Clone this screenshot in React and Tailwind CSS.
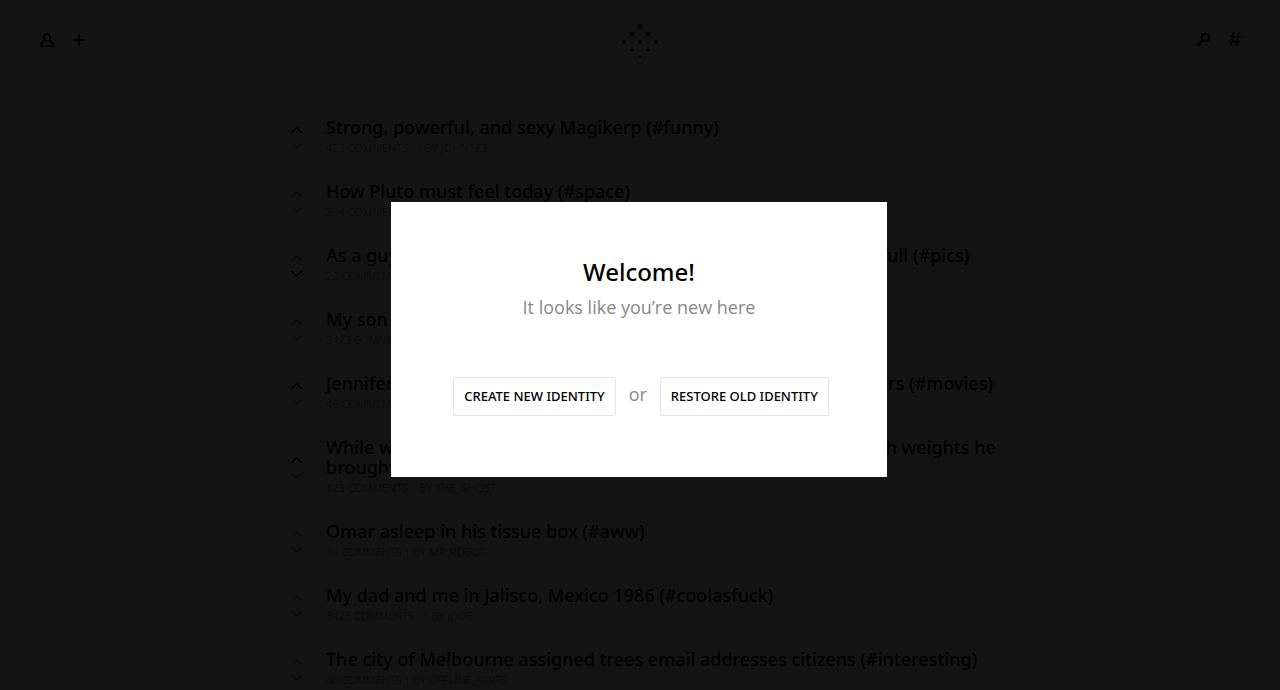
import React from "react";

const posts = [
  { title: "Strong, powerful, and sexy Magikerp (#funny)", comments: 423, by: "JOHN123", vote: "up", wide: true },
  { title: "How Pluto must feel today (#space)", comments: 234, by: "ASTRO" },
  { title: "As a guy who never goes out to take photos, I found this old bar full (#pics)", comments: 22, by: "ALICE", vote: "down" },
  { title: "My son made this for me today (#aww)", comments: 3423, by: "JDOE" },
  { title: "Jennifer Lawrence is the best thing about all those new film posters (#movies)", comments: 46, by: "MOVIEFAN", vote: "up" },
  { title: "While working out today I saw a man at the big local gym lifts with weights he brought from his home (#fitness)", comments: 123, by: "THE_GHOST", vote: "up" },
  { title: "Omar asleep in his tissue box (#aww)", comments: 14, by: "MR_ROBOT" },
  { title: "My dad and me in Jalisco, Mexico 1986 (#coolasfuck)", comments: 3423, by: "JDOE", wide: true },
  { title: "The city of Melbourne assigned trees email addresses citizens (#interesting)", comments: 46, by: "OFFLINE_FARTS" },
];

const dots = [
  [20, 4, 2.6],
  [12, 12, 2.2],
  [28, 12, 2.2],
  [4, 20, 2],
  [20, 20, 2],
  [36, 20, 2],
  [12, 28, 1.6],
  [28, 28, 1.6],
  [20, 35, 1.1],
];

function Chevron({ direction, active }) {
  return (
    <button
      type="button"
      aria-label={direction === "up" ? "Upvote" : "Downvote"}
      className={active ? "block text-black" : "block text-neutral-400"}
    >
      <svg width="13" height="8" viewBox="0 0 13 8" fill="none" stroke="currentColor" strokeWidth="1.6" className="block">
        <path d={direction === "up" ? "M1.3 7 6.5 1.8 11.7 7" : "M1.3 1 6.5 6.2 11.7 1"} />
      </svg>
    </button>
  );
}

function Post({ post }) {
  return (
    <li className="flex items-center">
      <div className="flex w-9 shrink-0 flex-col gap-2">
        <Chevron direction="up" active={post.vote === "up"} />
        <Chevron direction="down" active={post.vote === "down"} />
      </div>
      <div className="min-w-0 flex-1 font-['Noto_Sans','Open_Sans',sans-serif]">
        <h2 className="text-lg/5 font-medium">
          <a href="#post">{post.title}</a>
        </h2>
        <p className="text-[11px]/[22px] font-light text-neutral-500">
          {post.comments} COMMENTS{post.wide ? "\u00a0\u00a0" : ""} | BY {post.by}
        </p>
      </div>
    </li>
  );
}

function Header() {
  return (
    <header className="grid grid-cols-[1fr_auto_1fr] items-center px-10 pt-5">
      <div className="flex items-center gap-[18px]">
        <button type="button" aria-label="Profile">
          <svg width="14" height="14" viewBox="0 0 14 14" fill="none" stroke="currentColor" strokeWidth="1.7" className="block">
            <ellipse cx="7" cy="4.4" rx="3.2" ry="3.6" />
            <path d="M4.6 7.9C2.3 8.6.9 10 .9 13h12.2c0-3-1.4-4.4-3.7-5.1" />
          </svg>
        </button>
        <button type="button" aria-label="New post">
          <svg width="14" height="14" viewBox="0 0 14 14" fill="none" stroke="currentColor" strokeWidth="2" className="block">
            <path d="M7 1v12M1 7h12" />
          </svg>
        </button>
      </div>
      <a href="#home" aria-label="Home">
        <svg width="40" height="40" viewBox="0 -2 40 40" fill="currentColor" className="block">
          {dots.map(([x, y, r]) => (
            <circle key={x + "-" + y} cx={x} cy={y} r={r} />
          ))}
        </svg>
      </a>
      <div className="-mr-0.5 flex items-center justify-end gap-[18px]">
        <button type="button" aria-label="Search">
          <svg width="14" height="14" viewBox="0 0 14 14" fill="none" stroke="currentColor" className="block">
            <circle cx="9.4" cy="4.4" r="3.8" strokeWidth="1.8" />
            <path d="M6.6 7.2 1.2 12.6" strokeWidth="2.5" />
          </svg>
        </button>
        <button type="button" aria-label="Tags">
          <svg width="14" height="16" viewBox="0 0 14 16" fill="none" stroke="currentColor" strokeWidth="1.5" className="block">
            <path d="M5.6 0 3 14M10.8 0 8.2 14M2 4.5h11.4M.8 9.5h11.4" />
          </svg>
        </button>
      </div>
    </header>
  );
}

function WelcomeDialog() {
  return (
    <div className="fixed inset-0 flex items-center justify-center bg-black/92 pr-0.5 pb-[11px]">
      <section
        role="dialog"
        aria-modal="true"
        aria-labelledby="welcome-title"
        className="w-full max-w-[496px] bg-white px-14 pt-[54px] pb-[61px] text-center"
      >
        <h1 id="welcome-title" className="font-['Noto_Sans','Open_Sans',sans-serif] text-2xl/8 font-medium">Welcome!</h1>
        <p className="pt-[3px] text-lg/8 text-[#888888]">It looks like you’re new here</p>
        <div className="flex items-center justify-center gap-[13px] pt-[54px] pl-1">
          <button type="button" className="rounded-xs border border-neutral-200 px-2.5 py-2 font-['Noto_Sans','Open_Sans',sans-serif] text-[13px]/[21px] font-medium whitespace-nowrap">
            CREATE NEW IDENTITY
          </button>
          <span className="pb-1.5 text-lg/8 text-[#888888]">or</span>
          <button type="button" className="rounded-xs border border-neutral-200 px-2.5 py-2 font-['Noto_Sans','Open_Sans',sans-serif] text-[13px]/[21px] font-medium whitespace-nowrap">
            RESTORE OLD IDENTITY
          </button>
        </div>
      </section>
    </div>
  );
}

export default function App() {
  return (
    <div className="h-screen overflow-hidden bg-white font-['Open_Sans','Noto_Sans',sans-serif] text-black">
      <Header />
      <main className="mx-auto max-w-[720px] pt-[57px] pl-2.5">
        <ul className="flex flex-col gap-[22px]">
          {posts.map((post) => (
            <Post key={post.title} post={post} />
          ))}
        </ul>
      </main>
      <WelcomeDialog />
    </div>
  );
}
